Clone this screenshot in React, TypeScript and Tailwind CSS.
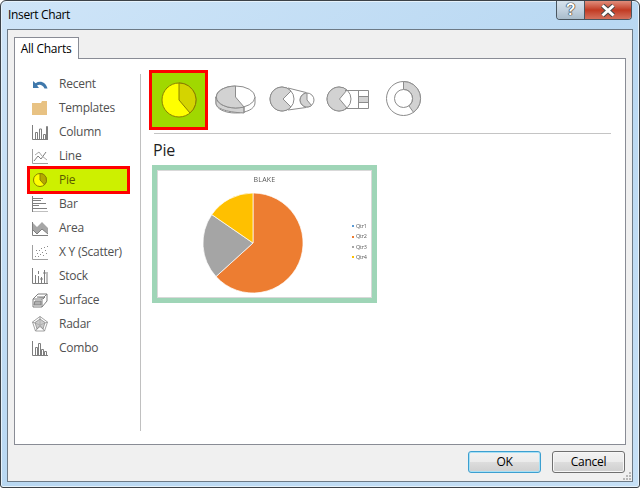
const line = "#7f7f7f";

function RecentIcon() {
  return (
    <svg width="16" height="16" viewBox="0 0 16 16">
      <path d="M1 5 L1 12 L7 12 L5 9.6 C7 8 10.5 8 12.5 12.5 L15.5 12.5 C14 6.5 8.5 4 3.6 7.2 Z" fill="#3f78ab" />
    </svg>
  );
}

function FolderIcon() {
  return (
    <svg width="16" height="16" viewBox="0 0 16 16">
      <path d="M0 3 L9 3 L10 1 L15 1 L15 15 L0 15 Z" fill="#e8c283" />
    </svg>
  );
}

function ColumnIcon() {
  return (
    <svg width="16" height="16" viewBox="0 0 16 16" fill="none" stroke={line}>
      <path d="M0.5 1 V15.5 H16" />
      <path d="M3.5 15 V8.5 H5.5 V15 M7.5 15 V5 H9.5 V15 M11.5 15 V10.5 H13.5 V15" />
      <path d="M14.5 15 V2.5 H15.5 V15" />
    </svg>
  );
}

function LineIcon() {
  return (
    <svg width="16" height="16" viewBox="0 0 16 16" fill="none" stroke={line}>
      <path d="M0.5 1 V15.5 H16" stroke="#a0a0a0" />
      <path d="M2 13 L6 8 L9 11 L14 4" />
      <path d="M3 7 L7 4 L10 8 L15 12" stroke="#a8a8a8" />
    </svg>
  );
}

function PieSmallIcon() {
  return (
    <svg width="16" height="16" viewBox="0 0 16 16">
      <circle cx="8" cy="8" r="6.5" fill="#ffff00" stroke="#8a8000" />
      <path d="M8 1.5 A6.5 6.5 0 0 1 12.4 12.8 L8 8 Z" fill="#b5a800" stroke="#8a8000" />
    </svg>
  );
}

function BarIcon() {
  return (
    <svg width="16" height="16" viewBox="0 0 16 16" fill="none" stroke={line}>
      <path d="M0.5 0 V16 H16" />
      <path d="M1 2.5 H11 M1 4.5 H9 M1 7.5 H14 M1 9.5 H7 M1 12.5 H15" />
    </svg>
  );
}

function AreaIcon() {
  return (
    <svg width="16" height="16" viewBox="0 0 16 16">
      <path d="M0 2 L5 7 L10 2 L16 8 V14 L10 9 L5 14 L0 9 Z" fill="#a6a6a6" />
      <path d="M0 9 L5 14 L10 9 L16 14 M0.5 2 V15.5 H16" fill="none" stroke="#7f7f7f" />
    </svg>
  );
}

function ScatterIcon() {
  const dots = [[3, 12], [5, 9], [6, 12], [7, 6], [8, 10], [9, 4], [10, 8], [11, 11], [12, 3], [13, 6], [14, 9], [4, 6], [15, 2]];
  return (
    <svg width="16" height="16" viewBox="0 0 16 16">
      <path d="M0.5 1 V15.5 H16" fill="none" stroke="#a0a0a0" />
      {dots.map(([x, y]) => (
        <rect key={`${x}-${y}`} x={x} y={y} width="1" height="1" fill="#8c8c8c" />
      ))}
    </svg>
  );
}

function StockIcon() {
  return (
    <svg width="16" height="16" viewBox="0 0 16 16" fill="none" stroke={line}>
      <path d="M0.5 0 V15.5 H16" />
      <path d="M3.5 7 V15 M6.5 3 V6 M6.5 8 V15 M9.5 9 V15 M12.5 2 V15 M15 4 V15" />
      <path d="M8 11 H11 M11 5 H14" />
    </svg>
  );
}

function SurfaceIcon() {
  return (
    <svg width="16" height="16" viewBox="0 0 16 16" fill="none" stroke={line}>
      <path d="M1 7 L6 2 H15 V9 L10 15 H1 Z" />
      <path d="M1 7 H10 V15 M10 7 L15 2" />
      <path d="M3 9 H9 V13 H2 Z M5 5 H13 L11 7" fill="#b0b0b0" />
    </svg>
  );
}

function RadarIcon() {
  return (
    <svg width="16" height="16" viewBox="0 0 16 16" fill="none" stroke="#8c8c8c" strokeWidth="0.8">
      <path d="M8 0.5 L15.5 6 L12.5 15 H3.5 L0.5 6 Z" />
      <path d="M8 0.5 V9 M15.5 6 L8 9 M12.5 15 L8 9 M3.5 15 L8 9 M0.5 6 L8 9" />
      <path d="M8 3 L13 6.5 L11 13 L8 10.5 L5 13 L3 6.5 Z" fill="#b5b5b5" fillOpacity="0.7" />
    </svg>
  );
}

function ComboIcon() {
  return (
    <svg width="16" height="16" viewBox="0 0 16 16" fill="none" stroke={line}>
      <path d="M0.5 1 V15.5 H16" />
      <path d="M3.5 15 V7.5 H5.5 V15 M6.5 15 V3.5 H8.5 V15 M9.5 15 V9.5 H11.5 V15 M12.5 15 V11.5 H14.5 V15" />
    </svg>
  );
}

const charts = [
  { name: "Recent", icon: <RecentIcon /> },
  { name: "Templates", icon: <FolderIcon /> },
  { name: "Column", icon: <ColumnIcon /> },
  { name: "Line", icon: <LineIcon /> },
  { name: "Pie", icon: <PieSmallIcon />, active: true },
  { name: "Bar", icon: <BarIcon /> },
  { name: "Area", icon: <AreaIcon /> },
  { name: "X Y (Scatter)", icon: <ScatterIcon /> },
  { name: "Stock", icon: <StockIcon /> },
  { name: "Surface", icon: <SurfaceIcon /> },
  { name: "Radar", icon: <RadarIcon /> },
  { name: "Combo", icon: <ComboIcon /> },
];

const legend = [
  { name: "Qtr1", color: "bg-[#5b9bd5]" },
  { name: "Qtr2", color: "bg-[#ed7d31]" },
  { name: "Qtr3", color: "bg-[#a5a5a5]" },
  { name: "Qtr4", color: "bg-[#ffc000]" },
];

function SubTypes() {
  const stroke = "#8c8c8c";
  const fill = "#d2d2d2";
  return (
    <div className="flex">
      <svg width="58" height="60" viewBox="208 70 58 60" fill="none" stroke={stroke} strokeWidth="1">
        <path d="M216 97 V103 C216 109 225 113 235.5 113 C246 113 255 109 255 103 V97" fill="#ffffff" />
        <path d="M216 97 V103 C216 108 224 112 244 113 V107 C226 106 216 102 216 97 Z" fill={fill} />
        <ellipse cx="235.5" cy="97" rx="19.5" ry="11" fill="#ffffff" />
        <path d="M235.5 97 L235.5 86 A19.5 11 0 1 0 244 107 Z" fill={fill} />
        <path d="M244 107 V113" />
      </svg>
      <svg width="56" height="60" viewBox="266 70 56 60" fill="none" stroke={stroke} strokeWidth="1">
        <circle cx="282" cy="99" r="12" fill="#ffffff" />
        <path d="M282 87 A12 12 0 1 0 291 107 L283 99 L291 91 A12 12 0 0 0 282 87 Z" fill={fill} />
        <path d="M288 88 L306 92.5 M288 110 L306 107.5" />
        <circle cx="307" cy="100" r="7" fill="#ffffff" />
        <path d="M307 100 L307 93 A7 7 0 1 0 311.5 105.5 Z" fill={fill} />
      </svg>
      <svg width="58" height="60" viewBox="322 70 58 60" fill="none" stroke={stroke} strokeWidth="1">
        <circle cx="339" cy="99" r="12" fill="#ffffff" />
        <path d="M339 87 A12 12 0 1 0 347 108 L339.5 99 L347 90 A12 12 0 0 0 339 87 Z" fill={fill} />
        <rect x="358.5" y="96" width="10" height="6" fill={fill} stroke="none" />
        <path d="M345 90.5 H368.5 V108.5 H345 M358.5 90.5 V108.5 M358.5 96.5 H368.5 M358.5 102.5 H368.5" />
      </svg>
      <svg width="46" height="60" viewBox="380 70 46 60" fill="none" stroke={stroke} strokeWidth="1">
        <circle cx="403.5" cy="98.5" r="17" fill="#ffffff" />
        <path d="M403.5 81.5 A17 17 0 0 1 413.5 112.3 L408.8 105.8 A9 9 0 0 0 403.5 89.5 Z" fill={fill} />
        <circle cx="403.5" cy="98.5" r="9" fill="#ffffff" />
      </svg>
    </div>
  );
}

function ChartPreview() {
  return (
    <div className="w-[225px] h-[138px] border-[5px] border-[#9fd5b7] bg-white shadow-[inset_0_0_0_1px_#d9d9d9]">
      <div className="h-[22px] pt-[6px] text-center text-[7px] leading-[8px] text-[#595959] tracking-[0.2px] [filter:blur(0.3px)]">BLAKE</div>
      <div className="flex">
        <svg className="ml-[45px]" width="102" height="102" viewBox="-51 -51 102 102">
          <path d="M0 0 L0 -50 A50 50 0 1 1 -37 33.6 Z" fill="#ed7d31" stroke="#ffffff" strokeWidth="0.7" />
          <path d="M0 0 L-37 33.6 A50 50 0 0 1 -41.2 -28.4 Z" fill="#a5a5a5" stroke="#ffffff" strokeWidth="0.7" />
          <path d="M0 0 L-41.2 -28.4 A50 50 0 0 1 0 -50 Z" fill="#ffc000" stroke="#ffffff" strokeWidth="0.7" />
        </svg>
        <div className="ml-[48px] mt-[29px] flex flex-col">
          {legend.map((item) => (
            <div key={item.name} className="flex h-[10.4px] items-center gap-[2px] text-[5.5px] text-[#595959] [filter:blur(0.2px)]">
              <span className={`w-[2px] h-[2px] ${item.color}`} />
              {item.name}
            </div>
          ))}
        </div>
      </div>
    </div>
  );
}

function Gripper() {
  const dots = [[6, 0], [3, 3], [6, 3], [0, 6], [3, 6], [6, 6]];
  return (
    <svg className="absolute right-[1px] bottom-[1px]" width="8" height="8" viewBox="0 0 8 8">
      {dots.map(([x, y]) => (
        <rect key={`${x}-${y}`} x={x} y={y} width="2" height="2" fill="#b8b8b8" />
      ))}
    </svg>
  );
}

export default function App() {
  return (
    <div className="w-[640px] h-[488px] flex flex-col bg-white font-['Open_Sans',sans-serif] text-[12px] tracking-[-0.25px] overflow-hidden">
      <div className="w-full h-full flex flex-col rounded-t-[6px] rounded-b-[3px] border border-[#3c4248] bg-gradient-to-br from-[#cfe5f8] via-[#b9d8f2] to-[#c6e0f6] shadow-[inset_0_0_0_1px_#e6f2fb]">
        <div className="h-[28px] flex justify-between items-start pl-[7px] pr-[7px] shrink-0">
          <span className="mt-[6px] text-[12px] leading-[16px] text-black tracking-[-0.35px]">Insert Chart</span>
          <div className="flex h-[19px] rounded-b-[4px] border border-t-0 border-[#4a5660] overflow-hidden">
            <div className="w-[28px] flex items-center justify-center bg-gradient-to-b from-[#d6e2ec] via-[#c3d2df] to-[#a9bccb] border-r border-[#4a5660]">
              <span className="text-[16px] leading-none font-bold text-white font-['Liberation_Sans',sans-serif] [text-shadow:0_0_1px_#222,0_0_1px_#222,0_0_1px_#222]">?</span>
            </div>
            <div className="w-[46px] flex items-center justify-center bg-gradient-to-b from-[#e08d7b] via-[#c13a22] to-[#d4705c]">
              <svg width="16" height="13" viewBox="0 0 16 13">
                <path d="M2.5 1.5 L13.5 11.5 M13.5 1.5 L2.5 11.5" stroke="#4a4a4a" strokeWidth="5" />
                <path d="M2.5 1.5 L13.5 11.5 M13.5 1.5 L2.5 11.5" stroke="#ffffff" strokeWidth="3" />
              </svg>
            </div>
          </div>
        </div>

        <div className="relative mx-[6px] mb-[5px] flex-1 flex flex-col border border-[#6d7a86] bg-[#f0f0f0] px-[6px] pt-[7px]">
          <div className="relative z-10 -mb-px w-[65px] h-[22px] flex items-center justify-center border border-b-0 border-[#898c95] bg-white text-[12px] text-black pr-[1px]">
            All Charts
          </div>
          <div className="h-[387px] flex border border-[#898c95] bg-white">
            <div className="w-[126px] h-[357px] mt-[15px] flex flex-col items-start border-r border-[#c0c0c0] pl-[12px] shrink-0">
              <div className="-mt-[2px]" />
              {charts.map((chart) =>
                chart.active ? (
                  <div key={chart.name} className="-my-[2px] w-[103px] h-[28px] flex items-center gap-[11px] border-[3px] border-[#ff0000] bg-[#cdf000] pl-[2px] text-[#5a5a00]">
                    {chart.icon}
                    {chart.name}
                  </div>
                ) : (
                  <div key={chart.name} className="w-[103px] h-[24px] flex items-center gap-[11px] pl-[5px] text-[#505050]">
                    {chart.icon}
                    {chart.name}
                  </div>
                )
              )}
            </div>
            <div className="flex-1 flex flex-col pl-[8px] pt-[11px]">
              <div className="flex">
                <div className="w-[59px] h-[60px] flex items-center justify-center border-[3px] border-[#ff0000] bg-[#a0d800]">
                  <svg width="36" height="36" viewBox="0 0 36 36" stroke="#8a8000">
                    <circle cx="18" cy="18" r="17" fill="#ffff00" />
                    <path d="M18 1 A17 17 0 0 1 29 31 L18 18 Z" fill="#d4d400" />
                  </svg>
                </div>
                <SubTypes />
              </div>
              <div className="ml-[5px] mr-[14px] mt-[3px] h-px bg-[#c4c4c4]" />
              <div className="ml-[4px] mt-[4px] h-[24px] text-[16px] leading-[24px] text-[#1f1f1f]">Pie</div>
              <div className="ml-[3px] mt-[3px]">
                <ChartPreview />
              </div>
            </div>
          </div>
          <div className="flex justify-end gap-[11px] mt-[6px] mr-[1px]">
            <button className="w-[73px] h-[22px] rounded-[3px] border border-[#3c9fd0] bg-[linear-gradient(#f2f2f2_0%,#ebebeb_50%,#dddddd_50%,#cfcfcf_100%)] shadow-[inset_0_0_0_1px_#a8e0f5] text-[12px] leading-none text-black">OK</button>
            <button className="w-[73px] h-[22px] rounded-[3px] border border-[#707070] bg-[linear-gradient(#f2f2f2_0%,#ebebeb_50%,#dddddd_50%,#cfcfcf_100%)] shadow-[inset_0_0_0_1px_#f7f7f7] text-[12px] leading-none text-black">Cancel</button>
          </div>
          <Gripper />
        </div>
      </div>
    </div>
  );
}
